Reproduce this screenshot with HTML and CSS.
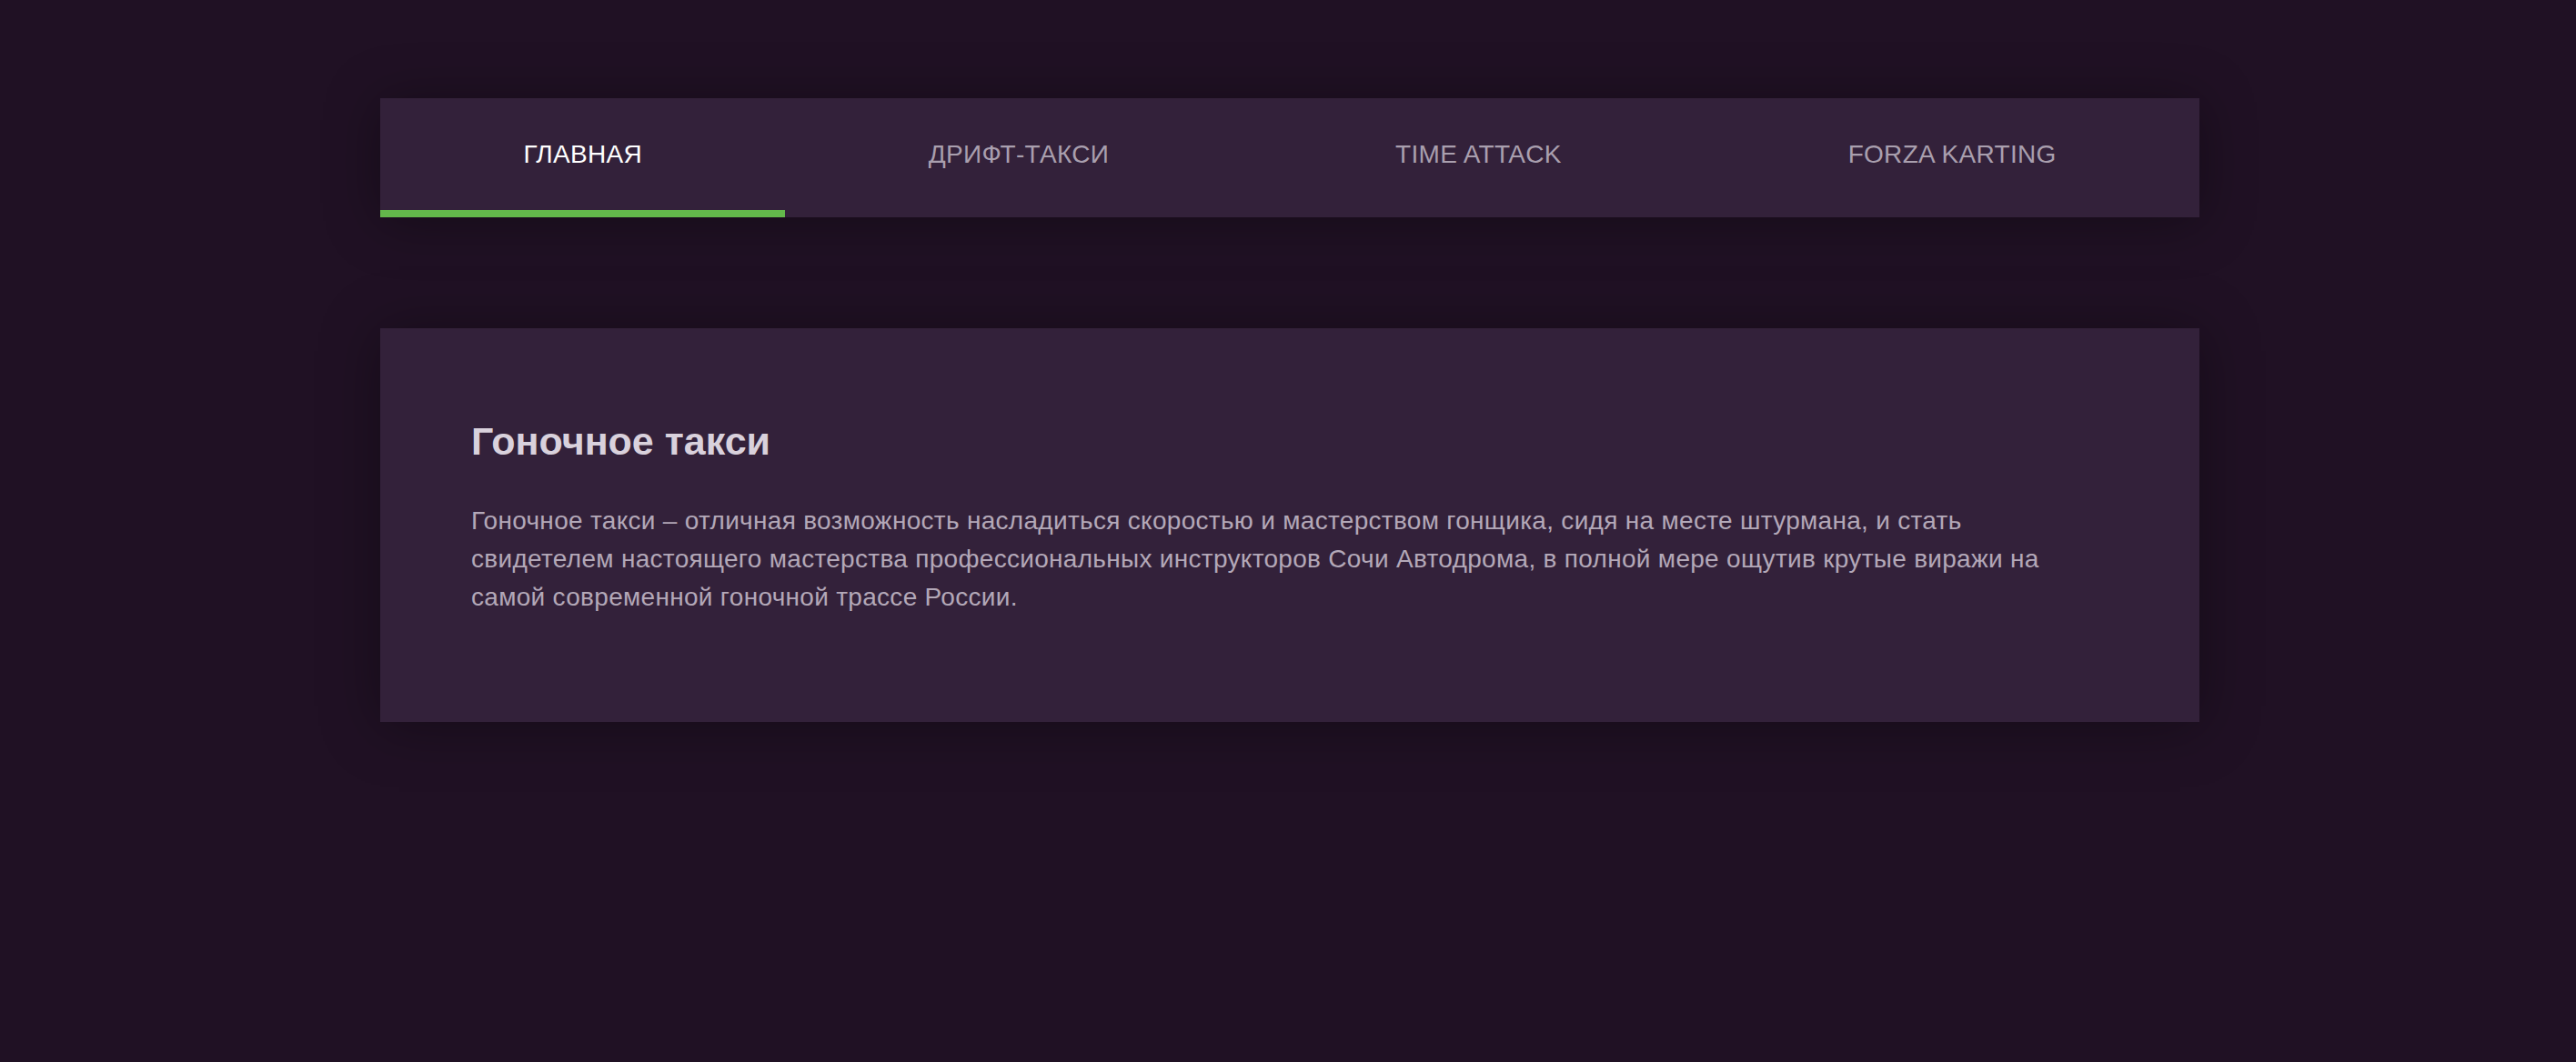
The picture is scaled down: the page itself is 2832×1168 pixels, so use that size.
FILE: index.html
```html
<!DOCTYPE html>
<html lang="ru">
<head>
<meta charset="utf-8">
<title>Гоночное такси</title>
<link rel="stylesheet" href="styles.css">
</head>
<body>
<main class="page">
  <nav class="tabs">
    <a class="tab tab-active" href="#">ГЛАВНАЯ</a>
    <a class="tab" href="#">ДРИФТ-ТАКСИ</a>
    <a class="tab" href="#">TIME ATTACK</a>
    <a class="tab" href="#">FORZA KARTING</a>
  </nav>
  <section class="card">
    <h2 class="card-title">Гоночное такси</h2>
    <p class="card-text">Гоночное такси – отличная возможность насладиться скоростью и мастерством гонщика, сидя на месте штурмана, и стать свидетелем настоящего мастерства профессиональных инструкторов Сочи Автодрома, в полной мере ощутив крутые виражи на самой современной гоночной трассе России.</p>
  </section>
</main>
</body>
</html>
```
FILE: styles.css
```css
html, body {
  margin: 0;
  padding: 0;
  background: #201124;
  height: 100%;
}
body {
  padding-left: 4px;
  box-sizing: border-box;
  font-family: "Liberation Sans", Arial, Helvetica, sans-serif;
}
.page {
  width: 2000px;
  margin: 0 auto;
  padding-top: 108px;
  display: flex;
  flex-direction: column;
  gap: 122px;
}
.tabs {
  display: flex;
  background: #33213a;
  box-shadow: 0 4px 60px rgba(0, 0, 0, 0.35);
}
.tab {
  flex: 1 1 auto;
  height: 123px;
  display: flex;
  align-items: center;
  justify-content: center;
  border-bottom: 8px solid transparent;
  font-size: 28px;
  letter-spacing: 0.3px;
  color: #a99fae;
  text-decoration: none;
  text-transform: uppercase;
  white-space: nowrap;
}
.tab-active {
  color: #ffffff;
  border-bottom-color: #63b84b;
}
.card {
  background: #33213a;
  box-shadow: 0 4px 60px rgba(0, 0, 0, 0.35);
  padding: 102px 150px 116px 100px;
}
.card-title {
  margin: 0 0 45px;
  font-size: 43px;
  font-weight: bold;
  line-height: 44px;
  color: #d9d1dc;
}
.card-text {
  margin: 0;
  font-size: 28px;
  line-height: 42px;
  letter-spacing: 0.3px;
  color: #b3a8b8;
}
```
